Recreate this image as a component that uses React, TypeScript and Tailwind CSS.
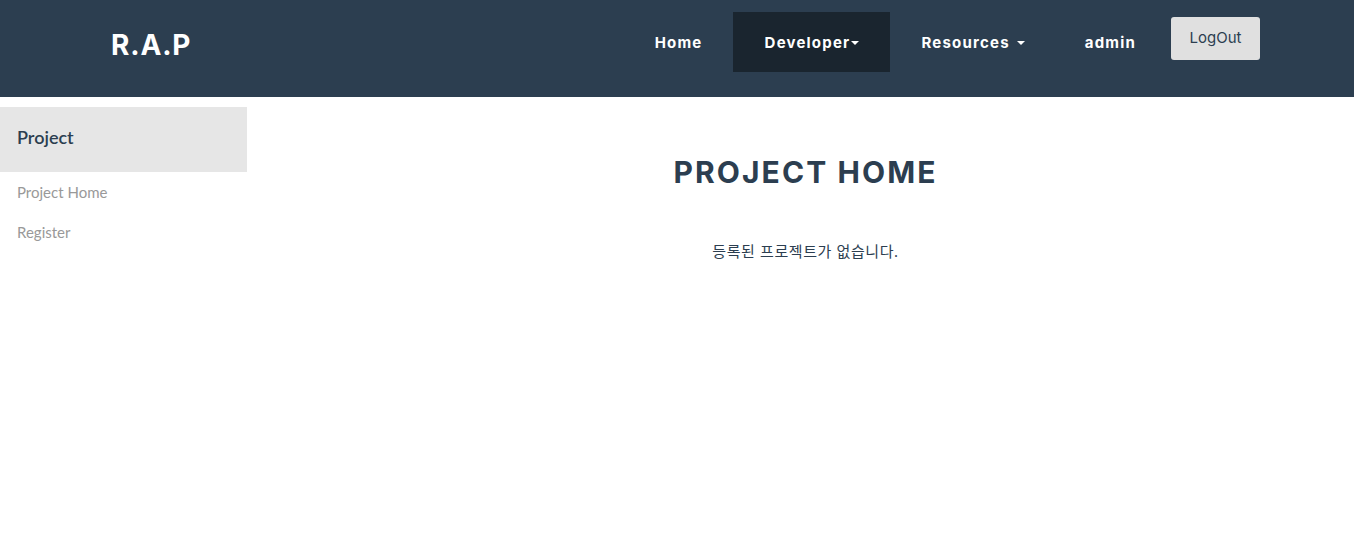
export default function App() {
  const nav = "font-['Inter',sans-serif] font-bold text-[15px] tracking-[0.08em] text-white pt-[2px]";
  return (
    <div className="min-h-screen bg-white">
      <nav className="h-[97px] bg-[#2c3e50] flex items-start">
        <div className="w-full flex items-start justify-between pl-[111px] pr-[94px]">
          <div className="h-[90px] flex items-center">
            <span className="font-['Inter',sans-serif] font-bold text-[28px] tracking-[0.03em] text-white">R.A.P</span>
          </div>
          <div className="flex items-start pt-[12px]">
            <a className={`${nav} h-[60px] pl-[30px] pr-[31px] flex items-center`}>Home</a>
            <a className={`${nav} h-[60px] w-[157px] bg-[#1a252f] flex items-center justify-center`}>
              Developer
              <span className="ml-[1px] border-x-[4px] border-x-transparent border-t-[4px] border-t-white" />
            </a>
            <a className={`${nav} h-[60px] pl-[31px] pr-[30px] flex items-center`}>
              Resources
              <span className="ml-[7px] border-x-[4px] border-x-transparent border-t-[4px] border-t-white" />
            </a>
            <a className={`${nav} h-[60px] pl-[30px] pr-[30px] flex items-center`}>admin</a>
            <button className="ml-[5px] mt-[5px] h-[43px] w-[89px] bg-[#e0e0e0] rounded-[3px] font-['Inter',sans-serif] text-[15px] text-[#2c3e50]">
              LogOut
            </button>
          </div>
        </div>
      </nav>

      <div className="flex pt-[10px]">
        <aside className="w-[247px] shrink-0">
          <div className="h-[65px] bg-[#e6e6e6] flex items-center px-[17px] pb-[4px]">
            <h3 className="font-['Lato',sans-serif] text-[18px] font-semibold text-[#2c3e50]">Project</h3>
          </div>
          <ul className="font-['Lato',sans-serif] text-[15px] text-[#999999] px-[17px]">
            <li className="h-[40px] flex items-center">Project Home</li>
            <li className="h-[40px] flex items-center">Register</li>
          </ul>
        </aside>
        <main className="flex-1 flex flex-col items-center pl-[10px]">
          <h1 className="mt-[43px] font-['Inter',sans-serif] font-bold text-[30px] tracking-[0.07em] text-[#2c3e50]">
            PROJECT HOME
          </h1>
          <p className="mt-[45px] font-['Noto_Sans','Noto_Sans_CJK_KR',sans-serif] text-[15px] tracking-[0.04em] text-[#2c3e50]">
            등록된 프로젝트가 없습니다.
          </p>
        </main>
      </div>
    </div>
  );
}
